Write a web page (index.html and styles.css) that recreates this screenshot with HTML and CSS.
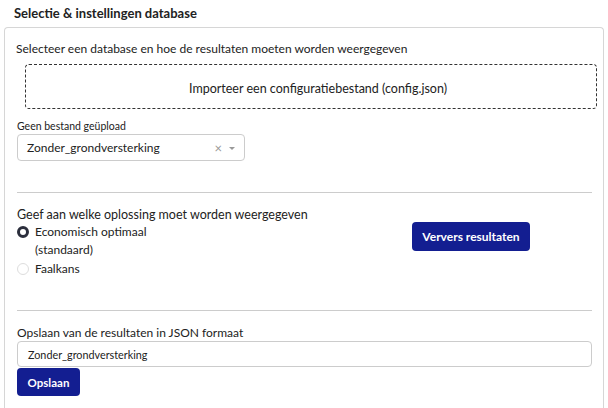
FILE: index.html
```html
<!DOCTYPE html>
<html>
<head>
<meta charset="utf-8">
<link rel="stylesheet" href="styles.css">
</head>
<body>
<div class="title">Selectie &amp; instellingen database</div>
<div class="card">
  <div class="intro">Selecteer een database en hoe de resultaten moeten worden weergegeven</div>
  <div class="upload">Importeer een configuratiebestand (config.json)</div>
  <div class="small-label">Geen bestand geüpload</div>
  <div class="select">
    <span class="select-value">Zonder_grondversterking</span>
    <span class="select-clear">×</span>
    <span class="select-arrow"></span>
  </div>
  <hr class="divider first">
  <div class="label label-big">Geef aan welke oplossing moet worden weergegeven</div>
  <div class="options-row">
    <div class="radios">
      <label class="radio-item">
        <span class="radio checked"></span>
        <span class="radio-text">Economisch optimaal<br>(standaard)</span>
      </label>
      <label class="radio-item">
        <span class="radio"></span>
        <span class="radio-text">Faalkans</span>
      </label>
    </div>
    <button class="btn btn-refresh">Ververs resultaten</button>
  </div>
  <hr class="divider second">
  <div class="label">Opslaan van de resultaten in JSON formaat</div>
  <div class="text-input">Zonder_grondversterking</div>
  <button class="btn btn-save">Opslaan</button>
</div>
</body>
</html>
```

FILE: styles.css
```css
*, *::before, *::after {
  box-sizing: border-box;
}
html, body {
  margin: 0;
  padding: 0;
  background: #fff;
}
body {
  font-family: Lato, "Noto Sans", "Liberation Sans", sans-serif;
  color: #222;
  font-size: 12px;
  overflow: hidden;
  height: 408px;
}
.title {
  font-weight: 700;
  font-size: 13px;
  line-height: 16px;
  padding: 5px 0 0 14px;
  height: 27px;
  color: #222;
}
.card {
  margin-left: 4px;
  width: 600px;
  border: 1px solid #d6d6d6;
  border-bottom: none;
  border-radius: 4px 4px 0 0;
  padding: 13px 11px 20px 12px;
  height: 400px;
}
.intro {
  font-size: 12px;
  line-height: 16px;
  margin-left: -1px;
}
.upload {
  margin: 7px -5px 0 8px;
  height: 45px;
  border: 1px dashed #333;
  border-radius: 4px;
  display: flex;
  align-items: center;
  justify-content: center;
  padding-top: 4px;
  padding-left: 14px;
  font-size: 12.5px;
}
.small-label {
  font-size: 10.5px;
  line-height: 14px;
  margin-top: 10px;
}
.select {
  margin-top: 1px;
  width: 228px;
  height: 27px;
  border: 1px solid #ccc;
  border-radius: 4px;
  display: flex;
  align-items: center;
  padding-left: 9px;
}
.select-value {
  flex: 1;
  font-size: 12px;
}
.select-clear {
  color: #999;
  font-size: 13px;
  margin-right: 7px;
}
.select-arrow {
  width: 0;
  height: 0;
  border-left: 3px solid transparent;
  border-right: 3px solid transparent;
  border-top: 3px solid #999;
  margin-right: 9px;
  margin-top: 2px;
}
.divider {
  border: none;
  border-top: 1px solid #ccc;
  margin: 0;
}
.divider.first {
  margin-top: 31px;
}
.divider.second {
  margin-top: 32px;
}
.label {
  line-height: 16px;
  margin-top: 14px;
  font-size: 12px;
}
.label-big {
  font-size: 12.5px;
}
.options-row {
  display: flex;
  align-items: flex-start;
}
.radios {
  display: flex;
  flex-direction: column;
  width: 395px;
}
.radio-item {
  display: flex;
  align-items: flex-start;
  line-height: 18px;
  font-size: 12px;
}
.radio-item + .radio-item {
  margin-top: 1px;
}
.radio {
  width: 12px;
  height: 12px;
  border-radius: 50%;
  border: 1px solid #ddd;
  margin: 3px 6px 0 0;
  background: #fff;
  flex: none;
}
.radio.checked {
  border: 3.5px solid #2b2e3c;
}
.btn {
  background: #131e91;
  color: #fff;
  border: none;
  border-radius: 4px;
  font-family: Lato, "Noto Sans", "Liberation Sans", sans-serif;
  font-weight: 700;
  padding: 0;
}
.btn-refresh {
  width: 118px;
  height: 29px;
  margin-top: -1px;
  font-size: 12px;
}
.text-input {
  margin-top: 0;
  height: 26px;
  border: 1px solid #ccc;
  border-radius: 4px;
  display: flex;
  align-items: center;
  padding-left: 10px;
  font-size: 10.8px;
}
.btn-save {
  width: 63px;
  height: 28px;
  margin-top: 1px;
  display: block;
  font-size: 11.5px;
}
```
